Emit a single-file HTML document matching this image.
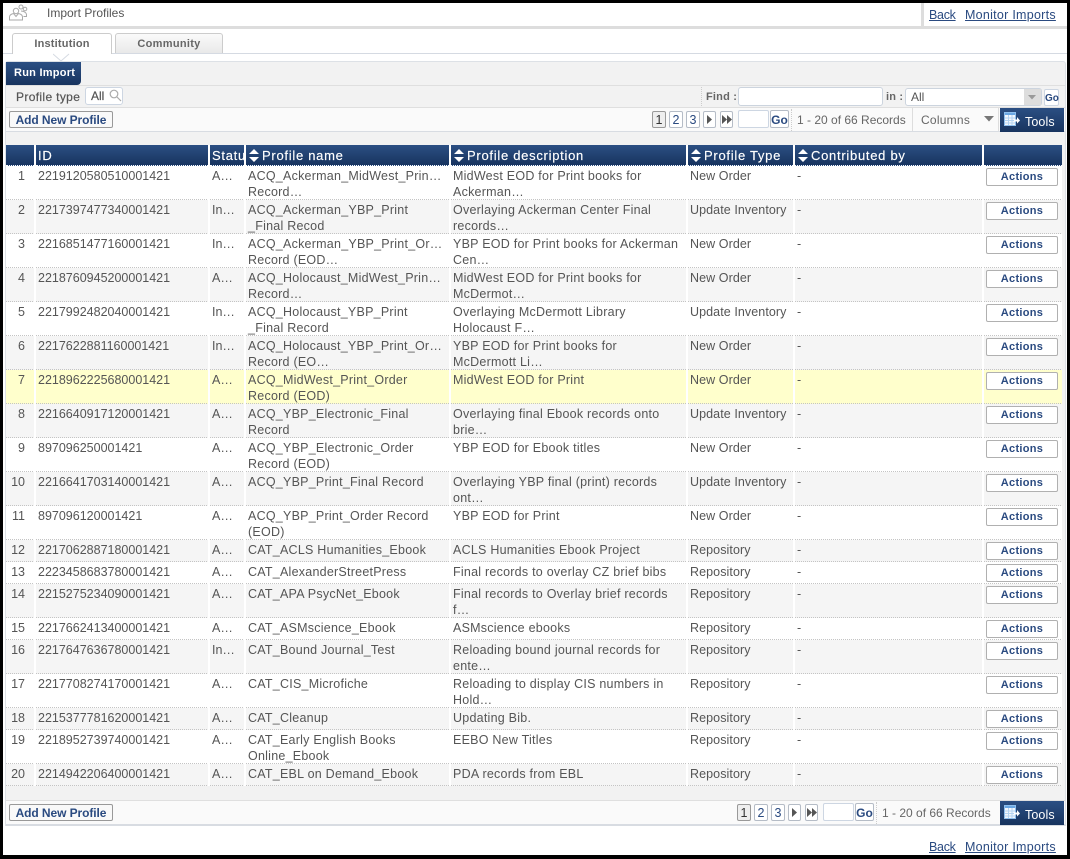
<!DOCTYPE html>
<html><head><meta charset="utf-8"><style>
html,body{margin:0;padding:0;background:#fff}
#p{position:relative;width:1070px;height:859px;overflow:hidden;background:#fff;font:12.5px/16px "Liberation Sans",sans-serif;color:#555}
.a{position:absolute;white-space:nowrap}
a{color:#2a4a80;text-decoration:underline}
.lnk{font-size:12.5px;line-height:16px}
.b{position:absolute;box-sizing:border-box;background:#fff;border:1px solid #b5bcc6;border-radius:2px;color:#2a4a80;text-align:center;font-weight:bold}
.pg{font-size:12.5px;line-height:16px;height:17px;font-weight:normal}
.add{font-size:12px;line-height:16px;height:17px;width:104px;left:9px;background:#f9f9f9;border-color:#999;letter-spacing:-.08px}
.hdr{background:linear-gradient(#2b4f83,#18345f)}
.tools{position:absolute;left:1000px;width:64px;background:linear-gradient(#2b4f83,#18345f);color:#fff;font-size:12.5px}
table{position:absolute;left:6px;top:145px;border-collapse:separate;border-spacing:0;table-layout:fixed;width:1056px;background:#fff}
th{height:21px;padding:1px 0 0 2px;box-sizing:border-box;text-align:left;color:#fff;font-weight:normal;font-size:13px;letter-spacing:.72px;background:linear-gradient(#2b4f83,#18345f);border-right:2px solid #fff;border-bottom:1px dotted #fff;white-space:nowrap;overflow:hidden;-webkit-text-stroke:.15px #fff}
th:last-child{border-right:0}
th i{display:inline-block;width:12px;height:13px;vertical-align:-2px;margin-right:2px}
td{box-sizing:border-box;padding:2px 0 0 2px;vertical-align:top;border-right:2px solid #fff;overflow:hidden;white-space:nowrap;line-height:16px;background-image:repeating-linear-gradient(90deg,#c4c4c4 0 1px,transparent 1px 2px);background-size:100% 1px;background-position:0 100%;background-repeat:no-repeat}
td:first-child{text-align:right;padding:2px 9px 0 0}
td:nth-child(4),td:nth-child(5){letter-spacing:.24px}
td:nth-child(6){letter-spacing:.08px}
td:last-child{border-right:0;padding:2px 0 0 2px}
tr.e td{background-color:#f5f5f5}
tr.h td{background-color:#ffc}
tr.s td{height:22px}
tr.t td{height:34px}
.ac{display:block;box-sizing:border-box;width:72px;height:18px;border:1px solid #b0b0b0;border-radius:2px;background:#fff;color:#2a4a80;font:bold 11px/16px "Liberation Sans",sans-serif;letter-spacing:.3px;text-align:center}
</style></head><body><div id="p">

<div class="a" style="left:0;top:0;width:1070px;height:3px;background:#000"></div>
<div class="a" style="left:0;top:855px;width:1070px;height:4px;background:#000"></div>
<div class="a" style="left:0;top:0;width:3px;height:859px;background:#000"></div>
<div class="a" style="left:1067px;top:0;width:3px;height:859px;background:#000"></div>

<div class="a" style="left:3px;top:26px;width:1064px;height:3px;background:#ddd"></div>
<div class="a" style="left:921px;top:3px;width:3px;height:23px;background:#ddd"></div>
<svg class="a" style="left:8px;top:3px" width="20" height="20" viewBox="0 0 20 20" fill="none" stroke="#aaa" stroke-width="1"><circle cx="8" cy="8" r="2.7"/><circle cx="13" cy="4" r="2"/><circle cx="17" cy="6" r="1.8"/><path d="M1.500 17v-3c0-2 2-3 4-3.500l2.500 3 2.500-3c2 .5 4 1.500 4 3.500v3z"/><path d="M13 8c2 0 5 1 5.500 3.500v2h-3"/></svg>
<div class="a" style="left:47px;top:5px;font-size:12px;color:#555;line-height:16px">Import Profiles</div>
<div class="a lnk" style="left:929px;top:7px;letter-spacing:-.3px"><a>Back</a></div>
<div class="a lnk" style="left:965px;top:7px;letter-spacing:.27px"><a>Monitor Imports</a></div>

<div class="a" style="left:3px;top:53px;width:1064px;height:1px;background:#d5dae2"></div>
<div class="a" style="left:12px;top:33px;width:100px;height:21px;box-sizing:border-box;background:#fff;border:1px solid #ccc;border-bottom:0;border-radius:3px 3px 0 0;text-align:center;font-weight:bold;font-size:11px;line-height:21px;letter-spacing:.2px;color:#666">Institution</div>
<div class="a" style="left:115px;top:33px;width:108px;height:20px;box-sizing:border-box;background:linear-gradient(#fafafa,#e9e9e9);border:1px solid #ccc;border-bottom:0;border-radius:3px 3px 0 0;text-align:center;font-weight:bold;font-size:11px;line-height:21px;letter-spacing:.3px;color:#666">Community</div>

<div class="a" style="left:5px;top:61px;width:1061px;height:765px;box-sizing:border-box;background:#f2f2f2;border:1px solid #dde1e6;border-radius:3px 3px 0 0"></div>
<svg class="a" style="left:53px;top:53px" width="17" height="9"><path d="M0 1L8 8L16 1" fill="#fff" stroke="#d5dae2"/></svg>
<div class="a hdr" style="left:6px;top:62px;width:75px;height:23px;border-radius:0 0 4px 0;color:#fff;font-size:11px;font-weight:bold;line-height:22px;text-indent:8px;letter-spacing:.25px">Run Import</div>
<div class="a" style="left:6px;top:85px;width:1059px;height:1px;background:#dfdfdf"></div>
<div class="a" style="left:16px;top:89px;font-size:12px;letter-spacing:.35px;color:#555;line-height:16px;-webkit-text-stroke:.2px #555">Profile type</div>
<div class="a" style="left:85px;top:87px;width:38px;height:18px;box-sizing:border-box;background:#fff;border:1px solid #cdd6e2;border-radius:3px;font-size:12px;line-height:16px;padding-left:5px;color:#555;-webkit-text-stroke:.2px #555">All</div>
<svg class="a" style="left:109px;top:89px" width="13" height="13" fill="none" stroke="#aaa" stroke-width="1.200"><circle cx="5" cy="5" r="3.800"/><path d="M8 8l4 4"/></svg>

<div class="a" style="left:701px;top:87px;height:19px;border-left:1px dotted #ccc"></div>
<div class="a" style="left:706px;top:89px;font-size:11px;font-weight:bold;letter-spacing:.2px;line-height:16px;color:#666">Find :</div>
<div class="a" style="left:738px;top:87px;width:145px;height:19px;box-sizing:border-box;background:#fff;border:1px solid #ccd4de;border-radius:3px"></div>
<div class="a" style="left:886px;top:89px;font-size:11px;font-weight:bold;letter-spacing:.2px;line-height:16px;color:#666">in :</div>
<div class="a" style="left:905px;top:88px;width:137px;height:18px;box-sizing:border-box;background:#fff;border:1px solid #ccd4de;border-radius:3px;font-size:12px;line-height:17px;padding-left:5px;color:#555">All</div>
<div class="a" style="left:1024px;top:89px;width:17px;height:16px;background:#ddd"></div>
<svg class="a" style="left:1028px;top:95px" width="9" height="5"><path d="M0 0h8L4 4.500z" fill="#999"/></svg>
<div class="b" style="left:1044px;top:89px;width:15px;height:17px;font-size:10px;line-height:17px;border-color:#cdd6e2">Go</div>

<div class="a" style="left:6px;top:107px;width:1059px;height:25px;box-sizing:border-box;background:#fafafa;border-top:1px solid #dfdfdf;border-bottom:1px solid #d8dce2"></div>
<div class="b add" style="top:111px">Add New Profile</div>
<div class="b pg" style="left:652px;top:111px;width:14px;background:#eee;border-color:#999;color:#333">1</div>
<div class="b pg" style="left:669px;top:111px;width:14px">2</div>
<div class="b pg" style="left:686px;top:111px;width:14px">3</div>
<div class="b pg" style="left:703px;top:111px;width:13px"></div>
<svg class="a" style="left:706px;top:115px" width="7" height="9"><path d="M1 0l5 4.500L1 9z" fill="#555"/></svg>
<div class="b pg" style="left:720px;top:111px;width:13px"></div>
<svg class="a" style="left:721px;top:115px" width="11" height="9"><path d="M1 0l5 4.500L1 9zM6 0l5 4.500L6 9z" fill="#555"/></svg>
<div class="b pg" style="left:738px;top:110px;width:31px;height:18px;border-color:#cdd6e2"></div>
<div class="b pg" style="left:770px;top:110px;width:19px;height:18px;font-weight:bold;font-size:12px;line-height:18px">Go</div>
<div class="a" style="left:791px;top:109px;height:22px;border-left:1px dotted #ccc"></div>
<div class="a" style="left:797px;top:112px;font-size:12px;color:#666">1 - 20 of 66 Records</div>
<div class="a" style="left:912px;top:108px;height:23px;border-left:1px solid #ddd"></div>
<div class="a" style="left:921px;top:112px;font-size:12px;letter-spacing:.25px;color:#666">Columns</div>
<svg class="a" style="left:984px;top:116px" width="11" height="6"><path d="M0 0h10L5 5.500z" fill="#777"/></svg>
<div class="a" style="left:998px;top:108px;height:23px;border-left:1px solid #ddd"></div>
<div class="tools" style="top:108px;height:24px"><span style="position:absolute;left:25px;top:6px;letter-spacing:.1px">Tools</span>
<svg style="position:absolute;left:4px;top:4px" width="16" height="15"><rect x=".5" y=".5" width="11" height="13" fill="#f4f8fd" stroke="#8fc0ee"/><rect x="1" y="1" width="10" height="2" fill="#6aa7e3"/><path d="M1 6h10M1 8.500h10M1 11h10M4.500 3v10M8 3v10" stroke="#b4d4f2"/><path d="M10 7.500h3V5l3 3.500-3 3V9.500h-3z" fill="#fff"/></svg></div>

<table><colgroup><col style="width:30px"><col style="width:174px"><col style="width:36px"><col style="width:205px"><col style="width:237px"><col style="width:107px"><col style="width:189px"><col style="width:78px"></colgroup>
<thead><tr><th></th><th>ID</th><th>Status</th>
<th><i><svg width="12" height="13"><path d="M6 0l5 5H1zM6 13l5-5H1z" fill="#fff"/></svg></i>Profile name</th>
<th><i><svg width="12" height="13"><path d="M6 0l5 5H1zM6 13l5-5H1z" fill="#fff"/></svg></i>Profile description</th>
<th><i><svg width="12" height="13"><path d="M6 0l5 5H1zM6 13l5-5H1z" fill="#fff"/></svg></i>Profile Type</th>
<th><i><svg width="12" height="13"><path d="M6 0l5 5H1zM6 13l5-5H1z" fill="#fff"/></svg></i>Contributed by</th>
<th></th></tr></thead>
<tbody>
<tr class="t"><td>1</td><td>2219120580510001421</td><td>A…</td><td>ACQ_Ackerman_MidWest_Prin…<br>Record…</td><td>MidWest EOD for Print books for<br>Ackerman…</td><td>New Order</td><td>-</td><td><span class="ac">Actions</span></td></tr>
<tr class="t e"><td>2</td><td>2217397477340001421</td><td>In…</td><td>ACQ_Ackerman_YBP_Print<br>_Final Recod</td><td>Overlaying Ackerman Center Final<br>records…</td><td>Update Inventory</td><td>-</td><td><span class="ac">Actions</span></td></tr>
<tr class="t"><td>3</td><td>2216851477160001421</td><td>In…</td><td>ACQ_Ackerman_YBP_Print_Or…<br>Record (EOD…</td><td>YBP EOD for Print books for Ackerman<br>Cen…</td><td>New Order</td><td>-</td><td><span class="ac">Actions</span></td></tr>
<tr class="t e"><td>4</td><td>2218760945200001421</td><td>A…</td><td>ACQ_Holocaust_MidWest_Prin…<br>Record…</td><td>MidWest EOD for Print books for<br>McDermot…</td><td>New Order</td><td>-</td><td><span class="ac">Actions</span></td></tr>
<tr class="t"><td>5</td><td>2217992482040001421</td><td>In…</td><td>ACQ_Holocaust_YBP_Print<br>_Final Record</td><td>Overlaying McDermott Library<br>Holocaust F…</td><td>Update Inventory</td><td>-</td><td><span class="ac">Actions</span></td></tr>
<tr class="t e"><td>6</td><td>2217622881160001421</td><td>In…</td><td>ACQ_Holocaust_YBP_Print_Or…<br>Record (EO…</td><td>YBP EOD for Print books for<br>McDermott Li…</td><td>New Order</td><td>-</td><td><span class="ac">Actions</span></td></tr>
<tr class="t h"><td>7</td><td>2218962225680001421</td><td>A…</td><td>ACQ_MidWest_Print_Order<br>Record (EOD)</td><td>MidWest EOD for Print</td><td>New Order</td><td>-</td><td><span class="ac">Actions</span></td></tr>
<tr class="t e"><td>8</td><td>2216640917120001421</td><td>A…</td><td>ACQ_YBP_Electronic_Final<br>Record</td><td>Overlaying final Ebook records onto<br>brie…</td><td>Update Inventory</td><td>-</td><td><span class="ac">Actions</span></td></tr>
<tr class="t"><td>9</td><td>897096250001421</td><td>A…</td><td>ACQ_YBP_Electronic_Order<br>Record (EOD)</td><td>YBP EOD for Ebook titles</td><td>New Order</td><td>-</td><td><span class="ac">Actions</span></td></tr>
<tr class="t e"><td>10</td><td>2216641703140001421</td><td>A…</td><td>ACQ_YBP_Print_Final Record</td><td>Overlaying YBP final (print) records<br>ont…</td><td>Update Inventory</td><td>-</td><td><span class="ac">Actions</span></td></tr>
<tr class="t"><td>11</td><td>897096120001421</td><td>A…</td><td>ACQ_YBP_Print_Order Record<br>(EOD)</td><td>YBP EOD for Print</td><td>New Order</td><td>-</td><td><span class="ac">Actions</span></td></tr>
<tr class="s e"><td>12</td><td>2217062887180001421</td><td>A…</td><td>CAT_ACLS Humanities_Ebook</td><td>ACLS Humanities Ebook Project</td><td>Repository</td><td>-</td><td><span class="ac">Actions</span></td></tr>
<tr class="s"><td>13</td><td>2223458683780001421</td><td>A…</td><td>CAT_AlexanderStreetPress</td><td>Final records to overlay CZ brief bibs</td><td>Repository</td><td>-</td><td><span class="ac">Actions</span></td></tr>
<tr class="t e"><td>14</td><td>2215275234090001421</td><td>A…</td><td>CAT_APA PsycNet_Ebook</td><td>Final records to Overlay brief records<br>f…</td><td>Repository</td><td>-</td><td><span class="ac">Actions</span></td></tr>
<tr class="s"><td>15</td><td>2217662413400001421</td><td>A…</td><td>CAT_ASMscience_Ebook</td><td>ASMscience ebooks</td><td>Repository</td><td>-</td><td><span class="ac">Actions</span></td></tr>
<tr class="t e"><td>16</td><td>2217647636780001421</td><td>In…</td><td>CAT_Bound Journal_Test</td><td>Reloading bound journal records for<br>ente…</td><td>Repository</td><td>-</td><td><span class="ac">Actions</span></td></tr>
<tr class="t"><td>17</td><td>2217708274170001421</td><td>A…</td><td>CAT_CIS_Microfiche</td><td>Reloading to display CIS numbers in<br>Hold…</td><td>Repository</td><td>-</td><td><span class="ac">Actions</span></td></tr>
<tr class="s e"><td>18</td><td>2215377781620001421</td><td>A…</td><td>CAT_Cleanup</td><td>Updating Bib.</td><td>Repository</td><td>-</td><td><span class="ac">Actions</span></td></tr>
<tr class="t"><td>19</td><td>2218952739740001421</td><td>A…</td><td>CAT_Early English Books<br>Online_Ebook</td><td>EEBO New Titles</td><td>Repository</td><td>-</td><td><span class="ac">Actions</span></td></tr>
<tr class="s e"><td>20</td><td>2214942206400001421</td><td>A…</td><td>CAT_EBL on Demand_Ebook</td><td>PDA records from EBL</td><td>Repository</td><td>-</td><td><span class="ac">Actions</span></td></tr>
</tbody></table>

<div class="a" style="left:6px;top:800px;width:1059px;height:26px;box-sizing:border-box;background:#fafafa;border-top:1px solid #dfdfdf;border-bottom:2px solid #d8dce2"></div>
<div class="b add" style="top:804px">Add New Profile</div>
<div class="b pg" style="left:737px;top:804px;width:14px;background:#eee;border-color:#999;color:#333">1</div>
<div class="b pg" style="left:754px;top:804px;width:14px">2</div>
<div class="b pg" style="left:771px;top:804px;width:14px">3</div>
<div class="b pg" style="left:788px;top:804px;width:13px"></div>
<svg class="a" style="left:791px;top:808px" width="7" height="9"><path d="M1 0l5 4.500L1 9z" fill="#555"/></svg>
<div class="b pg" style="left:805px;top:804px;width:13px"></div>
<svg class="a" style="left:806px;top:808px" width="11" height="9"><path d="M1 0l5 4.500L1 9zM6 0l5 4.500L6 9z" fill="#555"/></svg>
<div class="b pg" style="left:823px;top:803px;width:31px;height:18px;border-color:#cdd6e2"></div>
<div class="b pg" style="left:855px;top:803px;width:19px;height:18px;font-weight:bold;font-size:12px;line-height:18px">Go</div>
<div class="a" style="left:876px;top:802px;height:22px;border-left:1px dotted #ccc"></div>
<div class="a" style="left:882px;top:805px;font-size:12px;color:#666">1 - 20 of 66 Records</div>
<div class="tools" style="top:801px;height:24px"><span style="position:absolute;left:25px;top:6px;letter-spacing:.1px">Tools</span>
<svg style="position:absolute;left:4px;top:4px" width="16" height="15"><rect x=".5" y=".5" width="11" height="13" fill="#f4f8fd" stroke="#8fc0ee"/><rect x="1" y="1" width="10" height="2" fill="#6aa7e3"/><path d="M1 6h10M1 8.500h10M1 11h10M4.500 3v10M8 3v10" stroke="#b4d4f2"/><path d="M10 7.500h3V5l3 3.500-3 3V9.500h-3z" fill="#fff"/></svg></div>

<div class="a lnk" style="left:929px;top:839px;letter-spacing:-.3px"><a>Back</a></div>
<div class="a lnk" style="left:965px;top:839px;letter-spacing:.27px"><a>Monitor Imports</a></div>
</div></body></html>
